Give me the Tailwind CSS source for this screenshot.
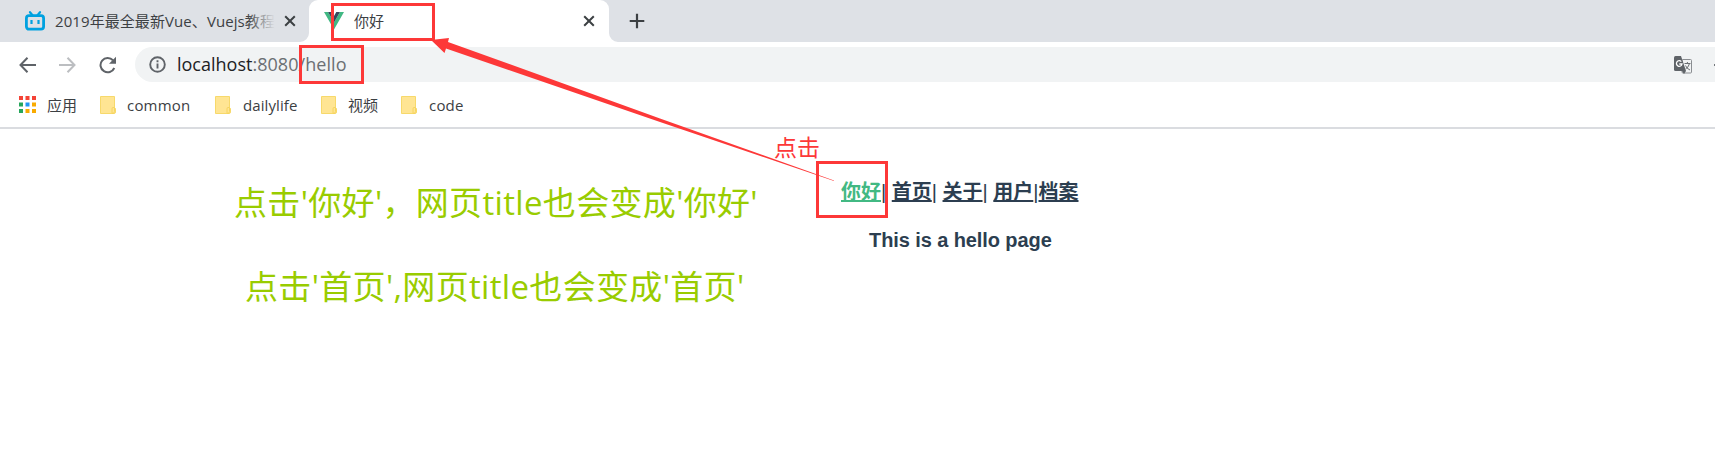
<!DOCTYPE html>
<html lang="zh">
<head>
<meta charset="utf-8">
<title>你好</title>
<script src="https://cdn.jsdelivr.net/npm/@tailwindcss/browser@4"></script>
</head>
<body class="relative h-[476px] w-[1715px] overflow-hidden bg-white font-['Open_Sans','Noto_Sans_CJK_SC',sans-serif] text-[#3c4043]">
<svg class="hidden">
  <symbol id="folder" viewBox="0 0 16 18"><path d="M.5.5h14v11l1 1v3.500a1.500 1.500 0 0 1-1.500 1.500H.5z" fill="#ffe593" stroke="#f7d96b"/><path d="M12 17.300v-4.600q0-1.200 1-1.200h1.500v4q0 1.600-1.500 1.800z" fill="#ffe593" stroke="#f5d25a" stroke-width=".9"/></symbol>
  <symbol id="close" viewBox="0 0 12 12"><path d="M1.200 1.200l9.600 9.600M10.800 1.200l-9.600 9.600" stroke="#3c4043" stroke-width="2"/></symbol>
</svg>
<header class="flex h-[42px] bg-[#dee1e6]">
  <div class="flex h-[42px] w-[309px] items-center pl-[25px] pb-px">
    <svg class="h-5 w-5 shrink-0" viewBox="0 0 20 20" fill="none"><path d="M5 1.200l2.500 3M15 1.200l-2.500 3" stroke="#00a1e0" stroke-width="2.200" stroke-linecap="round"/><rect x="1.400" y="4.700" width="17.200" height="13.500" rx="2.600" stroke="#00a1e0" stroke-width="2.800"/><path d="M6.500 9v4M13.500 9v4" stroke="#00a1e0" stroke-width="2.200"/></svg>
    <div class="relative ml-[10px] w-[220px] overflow-hidden whitespace-nowrap text-[15px] leading-6"><span class="tracking-[0.08px]">2019年最全最新Vue、Vuejs教程</span><div class="absolute inset-y-0 right-0 w-7 bg-linear-to-r from-[#dee1e6]/0 to-[#dee1e6]"></div></div>
    <svg class="ml-[9px] h-3 w-3 shrink-0"><use href="#close"/></svg>
  </div>
  <div class="relative flex h-[42px] w-[300px] items-center rounded-t-[9px] bg-white pl-[15px] pb-px">
    <svg class="absolute bottom-0 -left-[9px] h-[9px] w-[9px]" viewBox="0 0 9 9"><path d="M9 0v9H0a9 9 0 0 0 9-9z" fill="#fff"/></svg>
    <svg class="absolute bottom-0 -right-[9px] h-[9px] w-[9px]" viewBox="0 0 9 9"><path d="M0 0v9h9a9 9 0 0 1-9-9z" fill="#fff"/></svg>
    <svg class="h-[18px] w-5" viewBox="0 0 20 18"><path d="M0 0h4l6 10.500L16 0h4L10 17.500z" fill="#41b883"/><path d="M4 0h3.700L10 4l2.300-4H16l-6 10.500z" fill="#35495e"/></svg>
    <span class="ml-[10px] text-[15px] leading-6">你好</span>
    <svg class="ml-auto mr-[14px] h-3 w-3"><use href="#close"/></svg>
  </div>
  <svg class="ml-[20px] mt-[13px] h-4 w-4" viewBox="0 0 16 16"><path d="M8 .7v14.600M.7 8h14.600" stroke="#3c4043" stroke-width="2.200"/></svg>
</header>
<div class="flex h-[45px] items-center pl-[19px]">
  <svg class="h-4 w-[17px]" viewBox="0 0 17 16" fill="none" stroke="#5f6368" stroke-width="2"><path d="M8.500 .8L1.500 8l7 7.200M1.500 8H17"/></svg>
  <svg class="ml-[23px] h-4 w-[17px]" viewBox="0 0 17 16" fill="none" stroke="#bcbec1" stroke-width="2"><path d="M8.500 .8L15.500 8l-7 7.200M15.500 8H0"/></svg>
  <svg class="ml-[23px] h-[18px] w-[18px]" viewBox="0 0 18 18"><path d="M15.300 12A7.200 7.200 0 1 1 14 4.200" fill="none" stroke="#5f6368" stroke-width="2"/><path d="M17 .8v7h-7z" fill="#5f6368"/></svg>
  <div class="ml-[18px] flex h-[35px] flex-1 items-center rounded-l-full bg-[#f1f3f4] pl-[14px]">
    <svg class="h-[17px] w-[17px]" viewBox="0 0 17 17" fill="none" stroke="#5f6368" stroke-width="1.900"><circle cx="8.500" cy="8.500" r="7.300"/><path d="M8.500 7.500v5M8.500 4.200v2"/></svg>
    <div class="ml-[11px] whitespace-nowrap pb-[2px] text-[18px] leading-6 text-[#6b6f73]"><span class="text-[#202124]">localhost</span><span class="tracking-[0.05px]">:8080/hello</span></div>
    <svg class="ml-auto h-[18px] w-[18px]" viewBox="0 0 18 18"><rect x="8" y="3.500" width="9.500" height="13.500" rx="1" fill="#f1f3f4" stroke="#8a8d91"/><path d="M1.500 0H7l5 15H1.500Q0 15 0 13.500v-12Q0 0 1.500 0z" fill="#5f6368"/><path d="M8 15h4l-2 3z" fill="#5f6368"/><path d="M7.300 5.600A2.800 2.800 0 1 0 8 8H5.300" fill="none" stroke="#fff" stroke-width="1.300"/><path d="M10.500 7.500h6M13.400 6v1.500M15.500 7.500q-1 4-4 5.500M11.500 9.500q1 3 4.500 4.500" fill="none" stroke="#6b6f73"/></svg>
    <div class="ml-[22px] h-[2px] w-px bg-[#74777b]"></div>
  </div>
</div>
<nav class="flex h-[42px] items-center border-b-2 border-[#dadce0] pl-[19px] pb-[5px] text-[15px] leading-6">
  <svg class="h-[17px] w-[17px]" viewBox="0 0 17 17"><path d="M0 0h4v4H0zM6.500 0h4v4h-4zM13 0h4v4h-4z" fill="#f44336"/><path d="M0 6.500h4v4H0zM0 13h4v4H0z" fill="#26a65b"/><path d="M6.500 6.500h4v4h-4z" fill="#2196f3"/><path d="M13 6.500h4v4h-4zM6.500 13h4v4h-4zM13 13h4v4h-4z" fill="#f9ab00"/></svg>
  <span class="ml-[11px] w-[53px]">应用</span>
  <svg class="h-[18px] w-4"><use href="#folder"/></svg><span class="ml-[11px] w-[88px] tracking-[0.2px]">common</span>
  <svg class="h-[18px] w-4"><use href="#folder"/></svg><span class="ml-3 w-[78px] tracking-[0.1px]">dailylife</span>
  <svg class="h-[18px] w-4"><use href="#folder"/></svg><span class="ml-[11px] w-[53px]">视频</span>
  <svg class="h-[18px] w-4"><use href="#folder"/></svg><span class="ml-3 tracking-[0.2px]">code</span>
</nav>
<main class="flex">
  <section class="w-[841px] whitespace-nowrap text-[33px] leading-[44px] tracking-[0.33px] text-[#99cc00]">
    <p class="pl-[234px] pt-[52px]">点击'你好'，网页title也会变成'你好'</p>
    <p class="pl-[245px] pt-10">点击'首页',网页title也会变成'首页'</p>
  </section>
  <section class="whitespace-nowrap pt-[49px] font-['Liberation_Sans','Noto_Sans_CJK_SC',sans-serif] text-[20px] leading-[28px] text-[#2c3e50]">
    <div><a class="font-bold text-[#42b983] underline">你好</a>| <a class="font-bold underline">首页</a>| <a class="font-bold underline">关于</a>| <a class="font-bold underline">用户</a>|<a class="font-bold underline">档案</a></div>
    <h3 class="mt-5 pl-7 font-bold tracking-[-0.09px]">This is a hello page</h3>
  </section>
</main>
<div class="absolute left-[331px] top-[3px] h-[38px] w-[104px] border-3 border-[#fd3838]"></div>
<div class="absolute left-[299px] top-[45px] h-[39px] w-[65px] border-3 border-[#fd3838]"></div>
<div class="absolute left-[816px] top-[161px] h-[57px] w-[72px] border-3 border-[#fd3838]"></div>
<svg class="absolute left-0 top-0 h-[200px] w-[900px]" viewBox="0 0 900 200"><path d="M431 40L449 38 448 42 660 118.400 834 180.600 834 181 660 122 446 48.500 444.500 53z" fill="#fd3838"/></svg>
<div class="absolute left-[774px] top-[131px] text-[23px] leading-[32px] text-[#fd3838]">点击</div>
</body>
</html>
